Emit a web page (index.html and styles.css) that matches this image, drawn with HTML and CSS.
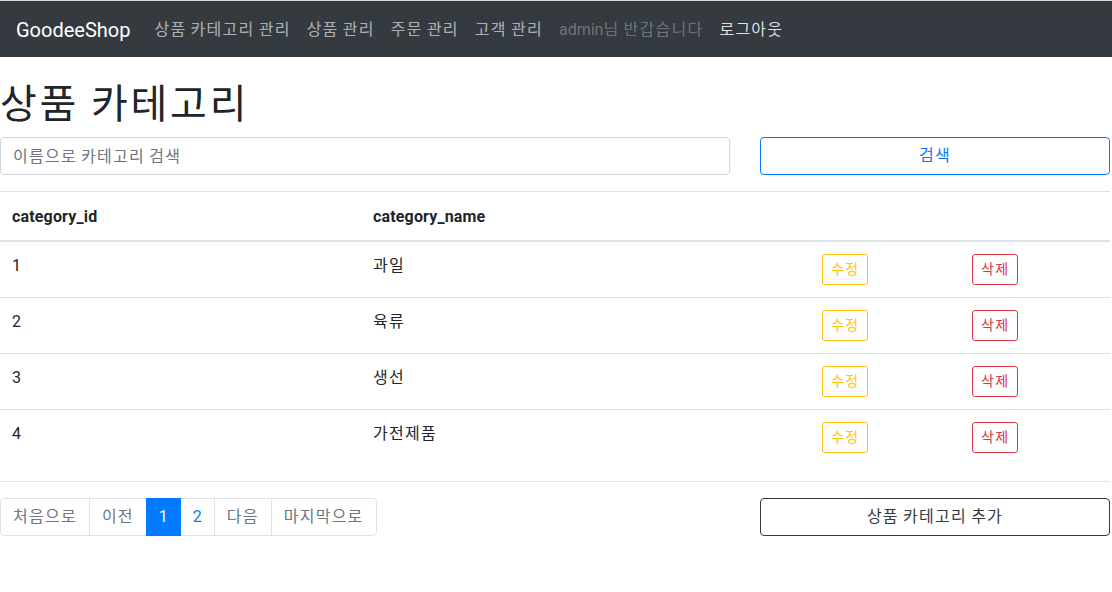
FILE: index.html
```html
<!DOCTYPE html>
<html lang="ko">
<head>
<meta charset="utf-8">
<title>상품 카테고리</title>
<link rel="stylesheet" href="styles.css">
</head>
<body>
<nav class="navbar">
  <a class="brand" href="#">GoodeeShop</a>
  <ul class="nav">
    <li><a class="nav-link" href="#">상품 카테고리 관리</a></li>
    <li><a class="nav-link" href="#">상품 관리</a></li>
    <li><a class="nav-link" href="#">주문 관리</a></li>
    <li><a class="nav-link" href="#">고객 관리</a></li>
    <li><span class="nav-link dim"><span class="en">admin</span>님 반갑습니다</span></li>
    <li><a class="nav-link bright" href="#">로그아웃</a></li>
  </ul>
</nav>
<main class="container">
  <h1 class="title">상품 카테고리</h1>
  <form class="row">
    <input class="form-control" type="text" placeholder="이름으로 카테고리 검색">
    <button class="btn btn-outline-primary" type="button">검색</button>
  </form>
  <table class="table">
    <thead>
      <tr>
        <th class="c1">category_id</th>
        <th class="c2">category_name</th>
        <th class="c3"></th>
        <th class="c4"></th>
      </tr>
    </thead>
    <tbody>
      <tr><td>1</td><td>과일</td><td><button class="btn-sm warn">수정</button></td><td><button class="btn-sm danger">삭제</button></td></tr>
      <tr><td>2</td><td>육류</td><td><button class="btn-sm warn">수정</button></td><td><button class="btn-sm danger">삭제</button></td></tr>
      <tr><td>3</td><td>생선</td><td><button class="btn-sm warn">수정</button></td><td><button class="btn-sm danger">삭제</button></td></tr>
      <tr><td>4</td><td>가전제품</td><td><button class="btn-sm warn">수정</button></td><td><button class="btn-sm danger">삭제</button></td></tr>
    </tbody>
  </table>
  <hr class="divider">
  <div class="row">
    <ul class="pagination">
      <li><a class="page-link" href="#">처음으로</a></li>
      <li><a class="page-link" href="#">이전</a></li>
      <li><a class="page-link num active" href="#">1</a></li>
      <li><a class="page-link num blue" href="#">2</a></li>
      <li><a class="page-link" href="#">다음</a></li>
      <li><a class="page-link" href="#">마지막으로</a></li>
    </ul>
    <button class="btn btn-outline-dark" type="button">상품 카테고리 추가</button>
  </div>
</main>
</body>
</html>
```
FILE: styles.css
```css
* { box-sizing: border-box; }
html, body { margin: 0; padding: 0; }
body {
  font-family: Roboto, "Noto Sans CJK JP", sans-serif;
  font-size: 16px;
  line-height: 1.5;
  letter-spacing: .078em;
  word-spacing: -1px;
  color: #212529;
  background: #fff;
}
a { text-decoration: none; }
.en { letter-spacing: 0; }

.navbar {
  display: flex;
  align-items: center;
  height: 57px;
  padding: 9px 16px 8px;
  background: #343a40;
  border-top: 1px solid #d8d8d8;
}
.brand {
  color: #fff;
  font-size: 20px;
  line-height: 30px;
  margin-right: 16px;
  letter-spacing: 0;
}
.nav {
  display: flex;
  list-style: none;
  margin: 0;
  padding: 0;
}
.nav-link {
  display: block;
  padding: 8px;
  color: rgba(255,255,255,.62);
  line-height: 24px;
}
.nav-link.dim { color: rgba(255,255,255,.3); }
.nav-link.bright { color: rgba(255,255,255,.85); }

.container {
  width: 1110px;
}
.title {
  font-size: 40px;
  font-weight: 400;
  line-height: 48px;
  letter-spacing: .07em;
  margin: 24px 0 8px;
}
.row {
  display: grid;
  grid-template-columns: 730px 350px;
  column-gap: 30px;
  align-items: start;
}
.form-control {
  height: 38px;
  padding: 6px 12px;
  font: inherit;
  letter-spacing: inherit;
  word-spacing: inherit;
  color: #495057;
  border: 1px solid #ced4da;
  border-radius: 4px;
  background: #fff;
}
.form-control::placeholder { color: #6c757d; }
.btn {
  height: 38px;
  padding: 6px 12px;
  font: inherit;
  letter-spacing: inherit;
  word-spacing: inherit;
  background: #fff;
  border-radius: 4px;
  cursor: pointer;
}
.btn-outline-primary { border: 1px solid #007bff; color: #007bff; }
.btn-outline-dark { border: 1px solid #343a40; color: #343a40; }

.table {
  width: 1110px;
  margin-top: 16px;
  margin-bottom: 16px;
  border-collapse: collapse;
}
.table th, .table td {
  padding: 12px;
  text-align: left;
  vertical-align: top;
  border-top: 1px solid #dee2e6;
}
.table th { font-weight: 700; letter-spacing: .01em; padding-top: 13px; padding-bottom: 11px; }
.table thead th { border-bottom: 2px solid #dee2e6; }
.c1 { width: 361px; }
.c2 { width: 449px; }
.c3 { width: 150px; }
.c4 { width: 150px; }
.btn-sm {
  height: 31px;
  padding: 4px 8px;
  font: inherit;
  font-size: 14px;
  line-height: 21px;
  letter-spacing: inherit;
  background: #fff;
  border-radius: 3px;
}
.warn { border: 1px solid #ffc107; color: #ffc107; }
.danger { border: 1px solid #dc3545; color: #dc3545; }

.divider {
  margin: 0 0 16px;
  border: 0;
  border-top: 1px solid #e5e5e5;
}
.pagination {
  display: flex;
  list-style: none;
  margin: 0;
  padding: 0;
}
.page-link {
  display: block;
  padding: 7px 12px;
  line-height: 22px;
  color: #6c757d;
  border: 1px solid #dee2e6;
  margin-left: -1px;
}
.page-link.num { letter-spacing: 0; }
.pagination li:first-child .page-link {
  margin-left: 0;
  border-radius: 4px 0 0 4px;
}
.pagination li:last-child .page-link { border-radius: 0 4px 4px 0; }
.page-link.active {
  background: #007bff;
  border-color: #007bff;
  color: #fff;
  position: relative;
}
.page-link.blue { color: #007bff; }
```
